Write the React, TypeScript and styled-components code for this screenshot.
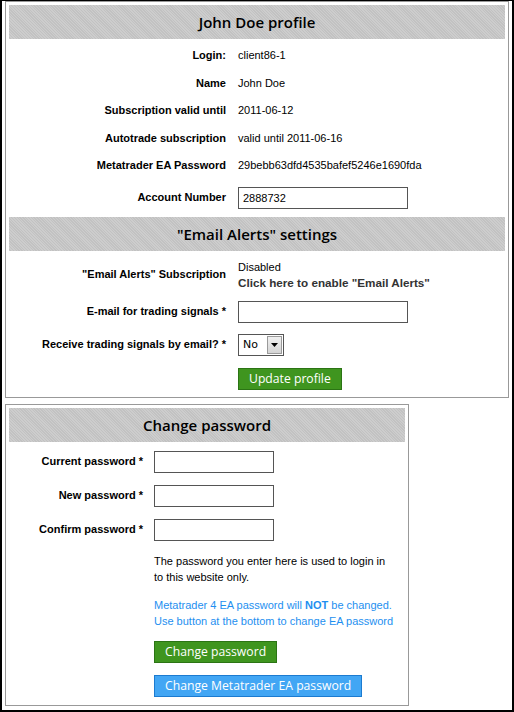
import React, { useState } from 'react';
import styled, { createGlobalStyle } from 'styled-components';

const GlobalStyle = createGlobalStyle`
  html, body {
    margin: 0;
    padding: 0;
    background: #fff;
  }
  body {
    font-family: "Liberation Sans", Arial, sans-serif;
    font-size: 11px;
    color: #000;
  }
`;

const Frame = styled.div`
  box-sizing: border-box;
  width: 514px;
  height: 712px;
  border: 2px solid #000;
  border-top-width: 1px;
  padding: 0 3px 0 3px;
  display: flex;
  flex-direction: column;
  gap: 6px;
  background: #fff;
`;

const Panel = styled.div<{ $width: number }>`
  box-sizing: border-box;
  width: ${({ $width }) => $width}px;
  border: 1px solid #999;
  padding: 3px;
`;

const Header = styled.div<{ $gapTop?: number }>`
  height: 34px;
  margin-top: ${({ $gapTop }) => $gapTop ?? 0}px;
  display: flex;
  align-items: center;
  justify-content: center;
  background: repeating-linear-gradient(
    45deg,
    #cdcdcd 0px,
    #cdcdcd 1px,
    #c2c2c2 1px,
    #c2c2c2 2px
  );
  font-family: "Open Sans", "DejaVu Sans", sans-serif;
  font-weight: 600;
  font-size: 15px;
  color: #000;
`;

const Body = styled.div<{ $labelWidth: number; $gap: number }>`
  display: grid;
  grid-template-columns: ${({ $labelWidth }) => $labelWidth}px 1fr;
  column-gap: ${({ $gap }) => $gap}px;
  padding-top: 3px;
  align-items: center;
`;

const Label = styled.div<{ $pad?: number }>`
  text-align: right;
  font-weight: bold;
  font-size: 11px;
  padding: ${({ $pad }) => $pad ?? 6}px 0;
  line-height: 15.5px;
`;

const Value = styled.div<{ $pad?: number }>`
  font-size: 11px;
  padding: ${({ $pad }) => $pad ?? 6}px 0;
  line-height: 15.5px;
`;

const Stack = styled.div`
  display: flex;
  flex-direction: column;
  line-height: 15px;
  padding: 6px 0;
`;

const EnableLink = styled.a`
  font-weight: bold;
  font-size: 11.7px;
  color: #333;
  text-decoration: none;
  cursor: pointer;
`;

const TextInput = styled.input<{ $width: number }>`
  box-sizing: border-box;
  width: ${({ $width }) => $width}px;
  height: 22px;
  border: 1px solid #555;
  padding: 0 4px;
  font-family: "Liberation Sans", Arial, sans-serif;
  font-size: 11px;
  color: #000;
  display: block;
  outline: none;
`;

const SelectBox = styled.div`
  position: relative;
  box-sizing: border-box;
  width: 46px;
  height: 22px;
  border: 1px solid #555;
  background: #fff;
`;

const NativeSelect = styled.select`
  appearance: none;
  -webkit-appearance: none;
  border: none;
  background: transparent;
  width: 100%;
  height: 100%;
  padding: 0 0 0 4px;
  font-family: "DejaVu Sans", sans-serif;
  font-size: 11px;
  color: #000;
  outline: none;
`;

const Arrow = styled.span`
  position: absolute;
  top: 1px;
  right: 1px;
  width: 15px;
  height: 18px;
  box-sizing: border-box;
  background: linear-gradient(#f0f0f0, #d4d4d4);
  border: 1px solid #9a9a9a;
  display: flex;
  align-items: center;
  justify-content: center;
  pointer-events: none;
`;

const Button = styled.button<{ $variant: 'green' | 'blue' }>`
  box-sizing: border-box;
  height: 22px;
  padding: 0 10px;
  border: 1px solid ${({ $variant }) => ($variant === 'green' ? '#2b7414' : '#1c7bd0')};
  background: ${({ $variant }) => ($variant === 'green' ? '#3f951f' : '#42a6f4')};
  color: #fff;
  font-family: "Open Sans", "DejaVu Sans", sans-serif;
  font-size: 12.2px;
  line-height: 20px;
  cursor: pointer;
  border-radius: 0;
`;

const ButtonCell = styled.div<{ $top: number; $bottom?: number }>`
  grid-column: 2;
  padding-top: ${({ $top }) => $top}px;
  padding-bottom: ${({ $bottom }) => $bottom ?? 0}px;
  display: flex;
  flex-direction: column;
  align-items: flex-start;
  gap: 12px;
`;

const Note = styled.p<{ $color?: string; $top: number }>`
  grid-column: 2;
  margin: ${({ $top }) => $top}px 0 0 0;
  font-size: 11px;
  line-height: 16px;
  color: ${({ $color }) => $color ?? '#000'};

  b {
    font-weight: bold;
  }
`;

const profileRows = [
  { label: 'Login:', value: 'client86-1' },
  { label: 'Name', value: 'John Doe' },
  { label: 'Subscription valid until', value: '2011-06-12' },
  { label: 'Autotrade subscription', value: 'valid until 2011-06-16' },
  { label: 'Metatrader EA Password', value: '29bebb63dfd4535bafef5246e1690fda' },
];

const App: React.FC = () => {
  const [account, setAccount] = useState('2888732');
  const [email, setEmail] = useState('');
  const [receive, setReceive] = useState('No');

  return (
    <>
      <GlobalStyle />
      <Frame>
        <Panel $width={504}>
          <Header>John Doe profile</Header>
          <Body $labelWidth={217} $gap={12}>
            {profileRows.map((row) => (
              <React.Fragment key={row.label}>
                <Label>{row.label}</Label>
                <Value>{row.value}</Value>
              </React.Fragment>
            ))}
            <Label $pad={7}>Account Number</Label>
            <Value $pad={7}>
              <TextInput $width={170} value={account} onChange={(e) => setAccount(e.target.value)} />
            </Value>
          </Body>

          <Header $gapTop={1}>"Email Alerts" settings</Header>
          <Body $labelWidth={217} $gap={12}>
            <Label>"Email Alerts" Subscription</Label>
            <Stack>
              <span>Disabled</span>
              <EnableLink>Click here to enable "Email Alerts"</EnableLink>
            </Stack>
            <Label $pad={5}>E-mail for trading signals *</Label>
            <Value $pad={5}>
              <TextInput $width={170} value={email} onChange={(e) => setEmail(e.target.value)} />
            </Value>
            <Label $pad={6}>Receive trading signals by email? *</Label>
            <Value $pad={6}>
              <SelectBox>
                <NativeSelect value={receive} onChange={(e) => setReceive(e.target.value)}>
                  <option>No</option>
                  <option>Yes</option>
                </NativeSelect>
                <Arrow>
                  <svg width="7" height="4" viewBox="0 0 7 4">
                    <path d="M0 0h7L3.5 4z" fill="#000" />
                  </svg>
                </Arrow>
              </SelectBox>
            </Value>
            <ButtonCell $top={6} $bottom={4}>
              <Button $variant="green">Update profile</Button>
            </ButtonCell>
          </Body>
        </Panel>

        <Panel $width={404}>
          <Header>Change password</Header>
          <Body $labelWidth={134} $gap={11}>
            <Label>Current password *</Label>
            <Value>
              <TextInput $width={120} type="password" />
            </Value>
            <Label>New password *</Label>
            <Value>
              <TextInput $width={120} type="password" />
            </Value>
            <Label>Confirm password *</Label>
            <Value>
              <TextInput $width={120} type="password" />
            </Value>
            <Note $top={6}>
              The password you enter here is used to login in
              <br />
              to this website only.
            </Note>
            <Note $top={12} $color="#1e8ff0">
              Metatrader 4 EA password will <b>NOT</b> be changed.
              <br />
              Use button at the bottom to change EA password
            </Note>
            <ButtonCell $top={12} $bottom={5}>
              <Button $variant="green">Change password</Button>
              <Button $variant="blue">Change Metatrader EA password</Button>
            </ButtonCell>
          </Body>
        </Panel>
      </Frame>
    </>
  );
};

export default App;
